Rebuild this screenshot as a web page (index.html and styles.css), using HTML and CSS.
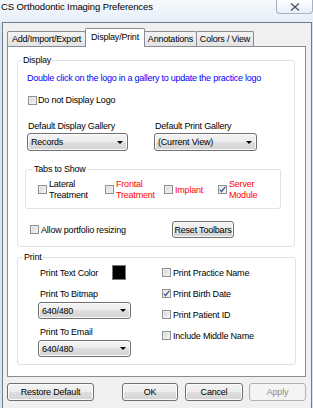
FILE: index.html
```html
<!DOCTYPE html>
<html>
<head>
<meta charset="utf-8">
<link rel="stylesheet" href="styles.css">
</head>
<body>
<div class="window">
  <div class="titlebar">
    <span class="title">CS Orthodontic Imaging Preferences</span>
    <div class="close">
      <svg width="10" height="8" viewBox="0 0 10 8"><path d="M1 0.5 L9 7.5 M9 0.5 L1 7.5" stroke="#4a525e" stroke-width="1.3" fill="none"/></svg>
    </div>
  </div>
  <div class="client">
    <div class="tabs">
      <div class="tab t1">Add/Import/Export</div>
      <div class="tab t2 active">Display/Print</div>
      <div class="tab t3">Annotations</div>
      <div class="tab t4">Colors / View</div>
    </div>
    <div class="panel">
      <div class="group g-display">
        <span class="legend">Display</span>
        <div class="hint">Double click on the logo in a gallery to update the practice logo</div>
        <div class="chk row-logo"><span class="cb"></span><span>Do not Display Logo</span></div>
        <div class="gallery-row">
          <div class="col c1">
            <div class="lbl">Default Display Gallery</div>
            <div class="dd w1"><span>Records</span><span class="arrow"></span></div>
          </div>
          <div class="col c2">
            <div class="lbl">Default Print Gallery</div>
            <div class="dd w2"><span>(Current View)</span><span class="arrow"></span></div>
          </div>
        </div>
        <div class="group g-tabs">
          <span class="legend">Tabs to Show</span>
          <div class="chk i1"><span class="cb"></span><span class="two">Lateral<br>Treatment</span></div>
          <div class="chk i2 red"><span class="cb"></span><span class="two">Frontal<br>Treatment</span></div>
          <div class="chk i3 red"><span class="cb"></span><span>Implant</span></div>
          <div class="chk i4 red"><span class="cb on"><svg width="7" height="7" viewBox="0 0 7 7"><path d="M0.8 3.6 L2.6 5.6 L6.2 0.8" stroke="#4a5f86" stroke-width="1.4" fill="none"/></svg></span><span class="two">Server<br>Module</span></div>
        </div>
        <div class="allow-row">
          <div class="chk allow"><span class="cb"></span><span>Allow portfolio resizing</span></div>
          <div class="btn reset">Reset Toolbars</div>
        </div>
      </div>
      <div class="group g-print">
        <span class="legend">Print</span>
        <div class="pcol left">
          <div class="color-row"><span>Print Text Color</span><span class="swatch"></span></div>
          <div class="lbl l-bmp">Print To Bitmap</div>
          <div class="dd w3"><span>640/480</span><span class="arrow"></span></div>
          <div class="lbl l-email">Print To Email</div>
          <div class="dd w3"><span>640/480</span><span class="arrow"></span></div>
        </div>
        <div class="pcol right">
          <div class="chk prow"><span class="cb"></span><span>Print Practice Name</span></div>
          <div class="chk prow"><span class="cb on"><svg width="7" height="7" viewBox="0 0 7 7"><path d="M0.8 3.6 L2.6 5.6 L6.2 0.8" stroke="#4a5f86" stroke-width="1.4" fill="none"/></svg></span><span>Print Birth Date</span></div>
          <div class="chk prow"><span class="cb"></span><span>Print Patient ID</span></div>
          <div class="chk prow"><span class="cb"></span><span>Include Middle Name</span></div>
        </div>
      </div>
    </div>
    <div class="footer">
      <div class="btn b-restore">Restore Default</div>
      <div class="btn b-ok">OK</div>
      <div class="btn b-cancel">Cancel</div>
      <div class="btn b-apply disabled">Apply</div>
    </div>
  </div>
</div>
</body>
</html>
```

FILE: styles.css
```css
* { box-sizing: border-box; }
html, body { margin: 0; padding: 0; }
body {
  width: 313px;
  height: 408px;
  overflow: hidden;
  background: #d6e3f2;
  font-family: "Liberation Sans", Arial, sans-serif;
  font-size: 9px;
  letter-spacing: -0.2px;
  line-height: 12px;
  color: #000;
}
.window { display: flex; flex-direction: column; height: 408px; }

.titlebar {
  height: 22px;
  flex: none;
  display: flex;
  justify-content: space-between;
  align-items: flex-start;
  background: linear-gradient(#f7fafd, #e6eef8);
  padding-left: 1px;
}
.title { margin-top: 1px; font-size: 9.5px; letter-spacing: -0.1px; line-height: 12px; }
.close {
  width: 37px;
  height: 14px;
  border: 1px solid #a7b1bf;
  border-top: 0;
  border-radius: 0 0 4px 4px;
  background: linear-gradient(#fdfeff, #e9eff7);
  display: flex;
  align-items: center;
  justify-content: center;
}

.client {
  flex: 1;
  margin: 0 1px 0 2px;
  border: 1px solid #707a88;
  border-bottom: 0;
  background: #f0f0f0;
  display: flex;
  flex-direction: column;
}

.tabs {
  display: flex;
  align-items: flex-end;
  height: 18px;
  margin: 5px 0 0 4px;
  position: relative;
  z-index: 2;
}
.tab {
  height: 15px;
  border: 1px solid #898c95;
  border-bottom: 0;
  border-radius: 2px 2px 0 0;
  background: linear-gradient(#f3f3f3, #e3e3e3);
  display: flex;
  align-items: center;
  justify-content: center;
  white-space: nowrap;
}
.t1 { width: 79px; }
.t2 { width: 60px; margin-left: -1px; }
.t3 { width: 53px; margin-left: -1px; }
.t4 { width: 58px; margin-left: -1px; }
.tab.active {
  height: 19px;
  margin-bottom: -1px;
  background: #fff;
  position: relative;
  z-index: 1;
  padding-bottom: 2px;
}

.panel {
  margin-left: 4px;
  width: 299px;
  height: 331px;
  flex: none;
  border: 1px solid #898c95;
  background: #fff;
  display: flex;
  flex-direction: column;
  align-items: flex-start;
}

.group {
  position: relative;
  border: 1px solid #dce3e8;
  border-radius: 3px;
}
.legend {
  position: absolute;
  top: -7px;
  background: #fff;
  padding: 0 1px;
  line-height: 12px;
  white-space: nowrap;
}

.g-display {
  margin: 13px 0 0 9px;
  width: 278px;
  padding-bottom: 8px;
  display: flex;
  flex-direction: column;
  align-items: flex-start;
}
.g-display > .legend { left: 4px; }
.hint { color: #0000ff; margin: 11px 0 0 9px; white-space: nowrap; letter-spacing: -0.25px; }

.chk { display: flex; align-items: center; white-space: nowrap; }
.cb {
  width: 9px;
  height: 9px;
  flex: none;
  border: 1px solid #8e8f8f;
  background: linear-gradient(135deg, #d2d4d8, #f7f7f7);
  box-shadow: inset 0 0 0 1px #eeeeee;
  margin-right: 2px;
  display: flex;
  align-items: center;
  justify-content: center;
}
.cb.on { background: linear-gradient(135deg, #e4e6ea, #fafafa); }
.row-logo { margin: 10px 0 0 10px; height: 12px; }
.row-logo .cb { margin-right: 1px; }

.gallery-row { display: flex; margin: 14px 0 0 9px; }
.col { display: flex; flex-direction: column; }
.c2 { margin-left: 26px; }
.lbl { padding-left: 1px; white-space: nowrap; }

.dd {
  height: 18px;
  margin-top: 1px;
  border: 1px solid #707070;
  border-radius: 3px;
  background: linear-gradient(#f3f3f3 0%, #ececec 50%, #dfdfdf 50%, #d3d3d3 100%);
  box-shadow: inset 0 0 0 1px #fbfbfb;
  display: flex;
  align-items: center;
  justify-content: space-between;
  padding: 0 4px 0 3px;
  white-space: nowrap;
}
.arrow {
  width: 0;
  height: 0;
  border-left: 3px solid transparent;
  border-right: 3px solid transparent;
  border-top: 3px solid #000;
}
.w1 { width: 101px; }
.w2 { width: 103px; }
.w3 { width: 93px; height: 17px; margin-top: 2px; }

.g-tabs {
  margin: 18px 0 0 7px;
  width: 256px;
  height: 40px;
  display: flex;
  align-items: center;
  padding-left: 12px;
  padding-top: 1px;
}
.g-tabs > .legend { left: 7px; }
.two { line-height: 11px; }
.red { color: #ff0000; }
.i1 { width: 67px; }
.i2 { width: 59px; }
.i3 { width: 54px; }

.allow-row { display: flex; align-items: center; height: 17px; margin: 12px 0 0 12px; }
.allow { width: 142px; }

.btn {
  height: 18px;
  border: 1px solid #707070;
  border-radius: 3px;
  background: linear-gradient(#f3f3f3 0%, #ececec 50%, #dfdfdf 50%, #d3d3d3 100%);
  box-shadow: inset 0 0 0 1px #fbfbfb;
  display: flex;
  align-items: center;
  justify-content: center;
  white-space: nowrap;
}
.reset { width: 62px; height: 17px; }

.g-print {
  margin: 10px 0 0 9px;
  width: 279px;
  display: flex;
  padding-bottom: 7px;
}
.g-print > .legend { left: 5px; }
.pcol { display: flex; flex-direction: column; align-items: flex-start; }
.left { margin-left: 20px; width: 124px; padding-top: 7px; }
.color-row { display: flex; align-items: center; height: 15px; padding-left: 2px; }
.color-row > span:first-child { width: 72px; }
.swatch { width: 14px; height: 15px; border: 1px solid #7a7a7a; background: #000; }
.l-bmp { margin-top: 8px; padding-left: 2px; }
.l-email { margin-top: 7px; padding-left: 2px; }
.right { padding-top: 4px; }
.prow { height: 21px; }

.footer {
  display: flex;
  align-items: center;
  margin-top: 6px;
  padding: 0 5px 0 4px;
}
.b-restore { width: 87px; }
.b-ok { width: 56px; margin-left: auto; }
.b-cancel { width: 58px; margin-left: 7px; }
.b-apply { width: 57px; margin-left: 6px; }
.btn.disabled {
  border-color: #adb2b5;
  background: #f4f4f4;
  box-shadow: none;
  color: #8d8d8d;
}
```
